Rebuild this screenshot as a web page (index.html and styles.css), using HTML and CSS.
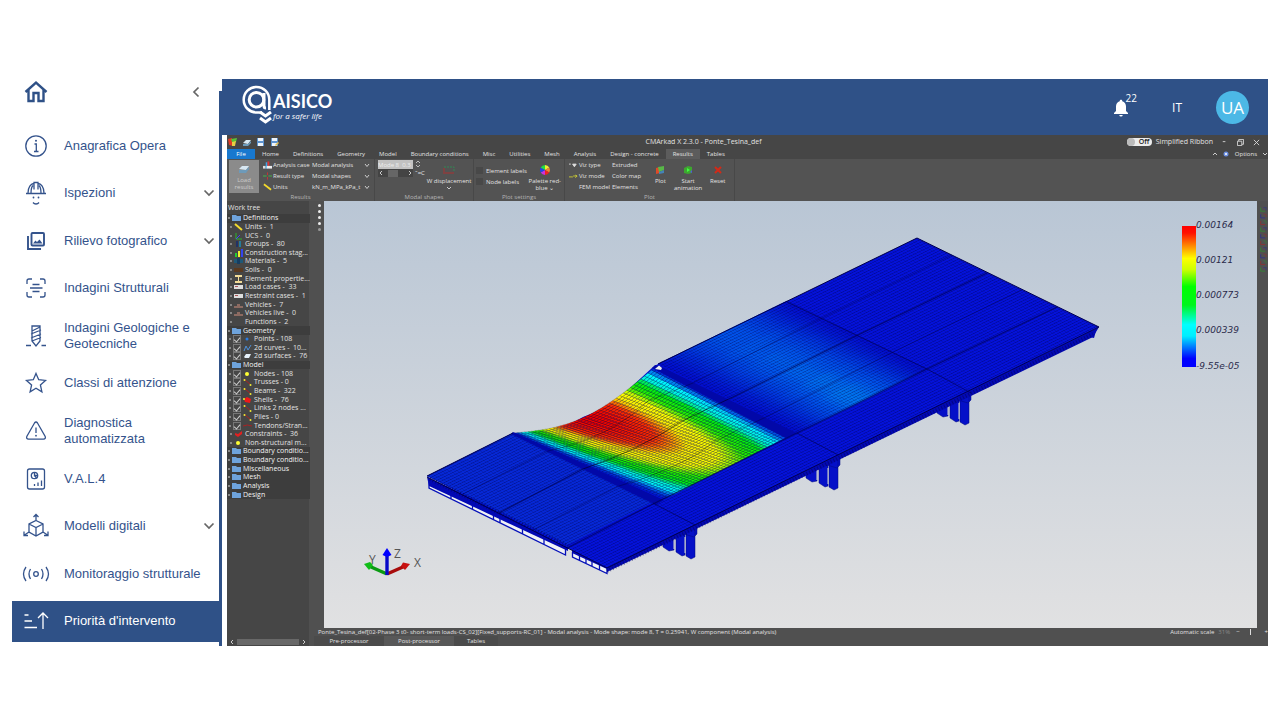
FILE: index.html
```html
<!DOCTYPE html>
<html lang="it">
<head>
<meta charset="utf-8">
<title>AISICO</title>
<link rel="stylesheet" href="styles.css">
</head>
<body>
<div class="app">
  <nav class="sidebar">
    <div class="side-top">
      <a href="#" class="home" aria-label="Home"><svg width="26" height="24" viewBox="0 0 26 24"><path d="M2.500 12 L13 2.500 L23.500 12 M5.500 10 V21 H10.500 V13 H15.500 V21 H20.500 V10" fill="none" stroke="#2f5187" stroke-width="2.400"/></svg></a>
      <button class="collapse" aria-label="Comprimi"><svg width="8" height="12" viewBox="0 0 8 12"><path d="M6.500 1.500 L2 6 L6.500 10.500" class="chev"/></svg></button>
    </div>
    <ul class="menu">
      <li><a href="#" class="item"><svg class="ico" viewBox="0 0 28 28"><circle cx="14" cy="14" r="10.200"/><path d="M12.500 12 H14.300 V19.500 M12 19.500 H16.500"/><circle cx="14" cy="8.700" r="1" class="dot"/></svg><span>Anagrafica Opera</span></a></li>
      <li><a href="#" class="item"><svg class="ico" viewBox="0 0 28 28"><path d="M4 14.500 H24 M6 14 C6 8 9 5 11.500 4.500 M16.500 4.500 C19 5 22 8 22 14 M12 10.500 V3.500 H16 V10.500 M9 14 C9 10 9.500 8 11 6.500 M19 14 C19 10 18.500 8 17 6.500 M11 23.500 C12.500 25.500 15.500 25.500 17 23.500"/><circle cx="11.500" cy="18.500" r=".9" class="dot"/><circle cx="16.500" cy="18.500" r=".9" class="dot"/></svg><span>Ispezioni</span><svg class="arrow" viewBox="0 0 12 8"><path d="M1.500 1.500 L6 6 L10.500 1.500" class="chev"/></svg></a></li>
      <li><a href="#" class="item"><svg class="ico thick" viewBox="0 0 28 28"><rect x="9.500" y="6" width="12.500" height="12.500" rx="1"/><path d="M6 9 V22 H19"/><path d="M11 16.500 L13.500 13.500 L15 15 L17.500 12.500 L20.500 16.500 Z" class="dot"/></svg><span>Rilievo fotografico</span><svg class="arrow" viewBox="0 0 12 8"><path d="M1.500 1.500 L6 6 L10.500 1.500" class="chev"/></svg></a></li>
      <li><a href="#" class="item"><svg class="ico" viewBox="0 0 28 28"><path d="M5 10 V7 Q5 5 7 5 H10 M18 5 H21 Q23 5 23 7 V10 M23 18 V21 Q23 23 21 23 H18 M10 23 H7 Q5 23 5 21 V18 M10.500 10.500 H17.500 M8 14 H20.500 M10.500 17.500 H17.500"/></svg><span>Indagini Strutturali</span></a></li>
      <li><a href="#" class="item"><svg class="ico" viewBox="0 0 28 28"><path d="M10 4 H18 V19 L14 24 L10 19 Z M10 9 L18 5 M9 12 L19 8 M9 16 L19 12 M10 19 L19 15.500 M4 23.500 H9 M19.500 23.500 H24"/></svg><span>Indagini Geologiche e Geotecniche</span></a></li>
      <li><a href="#" class="item"><svg class="ico" viewBox="0 0 28 28"><path d="M14 4.500 L16.700 10.700 L23.500 11.400 L18.400 15.900 L19.900 22.800 L14 19.200 L8.100 22.800 L9.600 15.900 L4.500 11.400 L11.300 10.700 Z"/></svg><span>Classi di attenzione</span></a></li>
      <li><a href="#" class="item"><svg class="ico" viewBox="0 0 28 28"><path d="M12.500 6 Q14 4 15.500 6 L23.200 19.500 Q24 22 21.500 22.200 H6.500 Q4 22 4.800 19.500 Z M14 10.500 V16"/><circle cx="14" cy="18.700" r=".9" class="dot"/></svg><span>Diagnostica automatizzata</span></a></li>
      <li><a href="#" class="item"><svg class="ico" viewBox="0 0 28 28"><rect x="5.500" y="4" width="17" height="20" rx="2"/><circle cx="12.500" cy="10.500" r="3.200"/><path d="M12.500 7.500 V10.500 H15.500 M12.500 10.500 L14.500 13 M12.500 21 V19 M16 21 V17.500 M19.500 21 V15.500"/></svg><span>V.A.L.4</span></a></li>
      <li><a href="#" class="item"><svg class="ico" viewBox="0 0 28 28"><path d="M14 8.500 L21 12 V20 L14 24 L7 20 V12 Z M7 12 L14 15.500 L21 12 M14 15.500 V24 M14 8.500 V3 M11.500 5 L14 2.500 L16.500 5 M7 20 L2.500 23 M2 19.500 V23.500 H6 M21 20 L25.500 23 M26 19.500 V23.500 H22"/></svg><span>Modelli digitali</span><svg class="arrow" viewBox="0 0 12 8"><path d="M1.500 1.500 L6 6 L10.500 1.500" class="chev"/></svg></a></li>
      <li><a href="#" class="item"><svg class="ico" viewBox="0 0 28 28"><circle cx="14" cy="14" r="2.300"/><path d="M8.500 9 Q5.500 14 8.500 19 M4 7 Q-1 14 4 21 M19.500 9 Q22.500 14 19.500 19 M24 7 Q29 14 24 21"/></svg><span>Monitoraggio strutturale</span></a></li>
      <li><a href="#" class="item selected"><svg class="ico" viewBox="0 0 28 28"><path d="M2.500 8 H6.500 M2.500 14 H10 M2.500 20.500 H15 M21 22 V6 M16 11 L21 6 L26 11"/></svg><span>Priorità d'intervento</span></a></li>
    </ul>
  </nav>

  <main class="main">
    <header class="header">
      <a href="#" class="brand">
        <svg width="30" height="42" viewBox="0 0 30 42"><g fill="none" stroke="#fff"><path d="M20 28.500 H14.500 A12.800 12.800 0 1 1 27.300 15.700 V26" stroke-width="2.500"/><path d="M22 9 V22 Q22 24 24 24" stroke-width="3"/><circle cx="14.500" cy="15.700" r="7.300" stroke-width="3"/><path d="M18 28 L23.500 32 L29 28 M18 34 L23.500 38 L29 34" stroke-width="3"/></g></svg>
        <span class="brand-text"><b>AISICO</b><i>for a safer life</i></span>
      </a>
      <div class="user-tools">
        <button class="bell" aria-label="Notifiche"><svg width="16" height="18" viewBox="0 0 16 18"><path d="M8 .8 C9 .8 9.300 1.500 9.300 2.300 C11.800 3 13 5 13 7.500 V12 L15 14 V15 H1 V14 L3 12 V7.500 C3 5 4.200 3 6.700 2.300 C6.700 1.500 7 .8 8 .8 Z M6.200 16 H9.800 Q9.500 17.500 8 17.500 Q6.500 17.500 6.200 16 Z" fill="#fff"/></svg><span>22</span></button>
        <button class="lang">IT</button>
        <button class="avatar">UA</button>
      </div>
    </header>

    <section class="window">
      <div class="titlebar">
        <div class="quick">
          <svg viewBox="0 0 10 9"><path d="M0 1 L4 0 L5 8 L1 7 Z" fill="#e23b25"/><path d="M3 1 L9 0 L8 4 L4 4 Z" fill="#59c236"/><path d="M4 4 L8 3 L7 8 L4 8 Z" fill="#e8cf43"/></svg>
          <svg viewBox="0 0 10 9"><path d="M1 5 L4 2 H9 L6 6 Z" fill="#d7e7f2"/><path d="M1 6 H6 L9 3 V5 L6 8 H1 Z" fill="#6d9ab9"/></svg>
          <svg viewBox="0 0 10 9"><path d="M1 0 H8 V8 H1 Z" fill="#5d93cf"/><path d="M2 0 H7 V3 H2 Z M2 5 H7 V8 H2 Z" fill="#eef4fa"/></svg>
          <svg viewBox="0 0 10 9"><path d="M1 0 H8 V8 H1 Z" fill="#5d93cf"/><path d="M2 0 H7 V3 H2 Z M2 5 H7 V8 H2 Z" fill="#eef4fa"/><path d="M5 7 L8 4 L9 5 L6 8 Z" fill="#e0bd4f"/></svg>
        </div>
        <h1 class="doc-title">CMArkad X 2.3.0 - Ponte_Tesina_def</h1>
        <div class="win-tools">
          <button class="toggle"><i></i>Off</button><span>Simplified Ribbon</span>
          <button class="winbtn" aria-label="Riduci"><svg viewBox="0 0 8 8"><path d="M2 3 H5"/></svg></button>
          <button class="winbtn" aria-label="Ripristina"><svg viewBox="0 0 8 8"><path d="M.5 2.500 H5.500 V7.500 H.5 Z M2 2.500 V.5 H7.500 V6 H5.500"/></svg></button>
          <button class="winbtn" aria-label="Chiudi"><svg viewBox="0 0 8 8"><path d="M1 1 L7 7 M7 1 L1 7"/></svg></button>
        </div>
      </div>
      <div class="tabs">
        <button class="file">File</button><button>Home</button><button>Definitions</button><button>Geometry</button><button>Model</button><button>Boundary conditions</button><button>Misc</button><button>Utilities</button><button>Mesh</button><button>Analysis</button><button>Design - concrete</button><button class="active">Results</button><button>Tables</button>
        <div class="options"><svg viewBox="0 0 4 4"><path d="M0 3 L2 1 L4 3" stroke="#ccc" fill="none"/></svg><svg class="eye" viewBox="0 0 6 6"><circle cx="3" cy="3" r="2.500" fill="#6d8fe0"/><circle cx="3" cy="3" r="1" fill="#fff"/></svg><button>Options</button><svg viewBox="0 0 4 4"><path d="M0 1 L2 3 L4 1" stroke="#ccc" fill="none"/></svg></div>
      </div>

      <div class="ribbon">
        <div class="group g-results">
          <div class="tools">
            <button class="big pressed"><svg viewBox="0 0 12 10"><path d="M1 5 L4 2 H11 L8 6 Z" fill="#d7e7f2"/><path d="M1 6 H8 L11 3 V5 L8 9 H1 Z" fill="#6d9ab9"/></svg>Load results</button>
            <div class="fields">
              <svg viewBox="0 0 10 8"><path d="M0 5 H3 V8 H0 Z" fill="#ddd"/><path d="M3 1 H5 V8 H3 Z" fill="#3aa5e8"/><path d="M5 0 H7 V5 H5 Z" fill="#d33"/><path d="M4 5 H10 V8 H4 Z" fill="#eee"/></svg><label for="ac">Analysis case</label><select id="ac"><option>Modal analysis</option></select>
              <svg viewBox="0 0 10 8"><path d="M0 4 H4 M6 4 H10" stroke="#4b4"/><path d="M5 0 V3 M5 5 V8" stroke="#c33"/></svg><label for="rt">Result type</label><select id="rt"><option>Modal shapes</option></select>
              <svg viewBox="0 0 10 8"><path d="M1 1 L9 7" stroke="#f4da2b" stroke-width="2"/></svg><label for="un">Units</label><select id="un"><option>kN_m_MPa_kPa_t</option></select>
            </div>
          </div>
          <p>Results</p>
        </div>
        <div class="group g-modal">
          <div class="tools">
            <div class="mode"><input aria-label="Mode" value="Mode 8  0.3"><span class="spin"><svg viewBox="0 0 6 8"><path d="M1 3 L3 1 L5 3 M1 5 L3 7 L5 5"/></svg></span><span class="hscroll"><svg viewBox="0 0 4 6"><path d="M3 1 L1 3 L3 5"/></svg><i></i><svg viewBox="0 0 4 6"><path d="M1 1 L3 3 L1 5"/></svg></span><span class="spin">˜=C</span></div>
            <button class="big"><svg viewBox="0 0 12 10"><path d="M1 9 V3 M2 8 H11" stroke="#a33" fill="none"/><path d="M1 2 H11 V7" stroke="#385" fill="none" stroke-dasharray="2 1"/></svg>W displacement<svg class="drop" viewBox="0 0 6 4"><path d="M1 1 L3 3 L5 1"/></svg></button>
          </div>
          <p>Modal shapes</p>
        </div>
        <div class="group g-plotset">
          <div class="tools">
            <div class="checks"><label><input type="checkbox">Element labels</label><label><input type="checkbox">Node labels</label></div>
            <button class="big"><svg viewBox="0 0 10 10"><path d="M5 5 V0 A5 5 0 0 1 9.300 2.500 Z" fill="#ee3"/><path d="M5 5 L9.300 2.500 A5 5 0 0 1 9.300 7.500 Z" fill="#e83"/><path d="M5 5 L9.300 7.500 A5 5 0 0 1 5 10 Z" fill="#e22"/><path d="M5 5 V10 A5 5 0 0 1 .7 7.500 Z" fill="#c3d"/><path d="M5 5 L.7 7.500 A5 5 0 0 1 .7 2.500 Z" fill="#24e"/><path d="M5 5 L.7 2.500 A5 5 0 0 1 5 0 Z" fill="#2d4"/></svg>Palette red-blue ⌄</button>
          </div>
          <p>Plot settings</p>
        </div>
        <div class="group g-plot">
          <div class="tools">
            <div class="fields two">
              <svg viewBox="0 0 10 8"><path d="M0 3 H2 M4 3 H8 L6 6 Z" stroke="#ddd" fill="#ddd"/></svg><span>Viz type</span><button>Extruded</button>
              <svg viewBox="0 0 10 8"><path d="M0 5 H4 L5 4 H9 M7 3 L9 4 L7 6" stroke="#cc3" fill="none"/></svg><span>Viz mode</span><button>Color map</button>
              <i></i><span>FEM model</span><button>Elements</button>
            </div>
            <button class="big b1"><svg viewBox="0 0 12 10"><path d="M2 3 L6 2 V8 L2 9 Z" fill="#e04a28"/><path d="M4 2 L10 1 V5 L5 7 Z" fill="#58b848"/><path d="M5 7 L10 5 V8 L5 9 Z" fill="#4483b8"/></svg>Plot</button>
            <button class="big b2"><svg viewBox="0 0 12 10"><path d="M2 3 L6 1 L10 2 V8 L6 9 L2 8 Z" fill="#3da72f"/><path d="M5 3 L8 5 L5 7 Z" fill="#40ff40"/><path d="M8 7 L10 5 V8 Z" fill="#55d"/></svg>Start animation</button>
            <button class="big b3"><svg viewBox="0 0 12 10"><path d="M3 2 L9 8 M9 2 L3 8" stroke="#d22a18" stroke-width="2"/></svg>Reset</button>
          </div>
          <p>Plot</p>
        </div>
      </div>

      <div class="work">
        <aside class="tree-panel">
          <h2>Work tree</h2>
          <ul class="tree" id="tree"></ul>
          <div class="hbar"><svg viewBox="0 0 4 6"><path d="M3 1 L1 3 L3 5"/></svg><i></i><svg viewBox="0 0 4 6"><path d="M1 1 L3 3 L1 5"/></svg></div>
        </aside>
        <div class="stage">
          <div class="stage-row">
            <div class="dots"><i></i><i></i><i></i><i></i><i></i></div>
            <svg class="view" viewBox="324 201 933 427" role="img" aria-label="Modal shape">
              <defs>
                <linearGradient id="sky" x1="0" y1="0" x2="0" y2="1"><stop offset="0" stop-color="#b9c6d5"/><stop offset="1" stop-color="#e1e1e2"/></linearGradient>
                <linearGradient id="scale" x1="0" y1="0" x2="0" y2="1"><stop offset="0" stop-color="#f00"/><stop offset=".05" stop-color="#f10"/><stop offset=".23" stop-color="#ff0"/><stop offset=".31" stop-color="#cf0"/><stop offset=".43" stop-color="#0f0"/><stop offset=".56" stop-color="#00f61c"/><stop offset=".7" stop-color="#0ff"/><stop offset=".78" stop-color="#0ef"/><stop offset=".94" stop-color="#00f"/><stop offset="1" stop-color="#00f"/></linearGradient>
                <pattern id="mesh" width="1" height="1" patternUnits="userSpaceOnUse" patternTransform="matrix(4 -1.944 3 1.467 427 476)"><path d="M0 0 H1" stroke="#000048" stroke-width=".26" opacity=".75"/><path d="M0 0 V1" stroke="#000048" stroke-width=".14" opacity=".5"/></pattern>
                <g id="pier"><path d="M663 540 L674 534 V550 L669 551 L663 547 Z M676 533 H685 V555 L682 556 L676 552 Z M686 527 H695 V557 L691 559 L686 556 Z M684 526 L697 522 V534 L694 537 L684 534 Z"/><path d="M674 538 V549 M685 537 V553" stroke="#d0d4dc" stroke-width="1"/></g>
              </defs>
              <rect x="324" y="201" width="933" height="427" fill="url(#sky)"/>
              <g fill="#0510c8" stroke="#00087e" stroke-width=".5">
                <use href="#pier"/><use href="#pier" x="143" y="-69"/><use href="#pier" x="274" y="-134"/>
              </g>
              <path d="M429 480 V488 L565 555 V546 Z M572 552 V557 L607 573 V567 Z" fill="#f0f2f5"/>
              <g fill="none" stroke="#0510b8" stroke-width="1.300">
                <path d="M429 482 V488 L565.500 555 V548 M451 492 V499 M472.500 502 V509 M493.500 513 V520 M500 516 V523 M522.500 527 V534 M544 537 V544"/>
                <path d="M572.500 552 V557 L607 573.500 V567 M579.500 555 V560 M586 558 V563 M592 561 V566 M599.500 565 V570"/>
              </g>
              <path d="M427 477 L429 486 L568 551 V543 Z" fill="#0309b4"/>
              <path d="M572 545 V553 L607 569 V560 Z" fill="#0309b4"/>
              <path d="M607 567 V572 L700 527 L1093 337 L1099 327 Z" fill="#0309b4"/>
              <path d="M1088 331 H1096 L1094 338 L1090 337 Z" fill="#0309b4"/>
              <path id="deck" d="M427 476 L513 433 Q540 433 557 427 Q570 425 583 417 Q597 412 607 405 Q620 397 630 388 L653 367 L658 364 L917 238 L1099 327 L607 568 Z" fill="#0412da"/>
              <path d="M427 476 L513 433 L653 502 L567 545 Z" fill="#0628d6"/>
              <g id="spans"></g>
              <path d="M427 476 L513 433 L655 502 L797 433 L658 364 L917 238 L1099 327 L607 568 Z" fill="url(#mesh)"/>
              <path d="M513 432 L664 500 L656 505 L511 434 Z M655 365 L660 366 L797 433 L786 438 L652 368 Z" fill="#0208a8"/>
              <path d="M655 369 L659 365.500 L662 368 L661 370 Z" fill="#e9edf2"/>
              <g fill="none" stroke="#000050">
                <path d="M427 476 L513 433 M658 364 L917 238 L1099 327 L607 568 L427 477" stroke-width="1"/>
                <path d="M499 513 L583 469 M735 396 L858 335 L987 273 M567 548 L657 502 L797 433 L927 369 L1057 307" stroke-width="1.200" opacity=".65"/>
                <path d="M583 469 Q640 450 680 422 L735 396" stroke="#000" stroke-width="1" opacity=".5"/>
                <path d="M463 494 L548 451 M533 530 L619 486 M693 383 L822 318 L952 255 M766 417 L893 352 L1022 290" stroke-width=".8" opacity=".5"/>
                <path d="M548 451 Q610 438 648 401 L693 383 M619 486 Q685 467 715 441 L766 417" stroke="#000" stroke-width=".8" opacity=".35"/>
                <path d="M653 503 L695 525 M797 433 L838 455 M787 302 L927 369 L971 393" stroke-width="1" opacity=".6"/>
                <path d="M430 479 L568 546 M607 571 L1093 334" stroke-width="4" stroke-dasharray="1 2" opacity=".45"/>
              </g>
              <g stroke-width="3.500">
                <path d="M387 574 L370 566.500" stroke="#0b9b12"/><path d="M364 564 L370 562 L373 565 L369 570 Z" fill="#10bd18"/>
                <path d="M387 574 L404 566.500" stroke="#a80c0c"/><path d="M410 564 L403 562.500 L401 566 L405 570 Z" fill="#c81010"/>
                <path d="M385.300 555 H388.700 V575 H385.300 Z" fill="#0808c8"/><path d="M387 548 L391.500 555 L387 557 L382.500 555 Z" fill="#00f"/>
              </g>
              <g class="axis"><text x="369" y="564">Y</text><text x="394" y="558">Z</text><text x="414" y="567">X</text></g>
              <rect x="1182" y="226" width="14" height="141" fill="url(#scale)"/>
              <g class="legend"><text x="1196" y="228">0.00164</text><text x="1196" y="263">0.00121</text><text x="1196" y="298">0.000773</text><text x="1196" y="333">0.000339</text><text x="1196" y="369">-9.55e-05</text></g>
            </svg>
            <div class="rail"><svg viewBox="0 0 10 74" id="rail"></svg></div>
          </div>
          <div class="status"><span>Ponte_Tesina_def[02-Phase 3 t0- short-term loads-CS_02][Fixed_supports-RC_01] - Modal analysis - Mode shape: mode 8, T = 0.25941, W component (Modal analysis)</span><span class="zoom">Automatic scale <em>31%</em><b>−</b><i></i><b>+</b></span></div>
          <div class="views"><button>Pre-processor</button><button class="on">Post-processor</button><button>Tables</button></div>
        </div>
      </div>
    </section>
  </main>
</div>
<script src="scene.js"></script>
</body>
</html>
```
FILE: styles.css
```css
* { box-sizing: border-box; }
body { margin: 0; background: #fff; font-family: "Liberation Sans", Arial, sans-serif; }
button { font: inherit; color: inherit; background: none; border: 0; padding: 0; cursor: pointer; }
a { color: inherit; text-decoration: none; }
ul { list-style: none; margin: 0; padding: 0; }
p, h1, h2 { margin: 0; font-weight: 400; font-size: inherit; }
.app { display: flex; margin: 79px 12px 0; }

.sidebar { width: 207px; flex: none; display: flex; flex-direction: column; padding-bottom: 4px; }
.side-top { height: 46px; display: flex; justify-content: space-between; padding: 1px 19px 0 11px; }
.home { height: 24px; }
.collapse { height: 24px; line-height: 1; padding-top: 2px; }
.chev { fill: none; stroke: #666; stroke-width: 1.7; }
.menu { flex: 1; display: flex; flex-direction: column; justify-content: space-between; }
.item { display: flex; align-items: center; height: 41px; padding: 0 4px 0 10px; font-size: 13px; line-height: 16px; color: #34538c; }
.item span { flex: 1; }
.ico { width: 28px; height: 28px; flex: none; margin-right: 14px; fill: none; stroke: #34538c; stroke-width: 1.3; }
.ico.thick { stroke-width: 1.9; }
.ico .dot { fill: #34538c; stroke: none; }
.arrow { width: 12px; height: 8px; flex: none; }
.item .arrow { margin-right: 0; }
.item.selected { background: #2f5187; color: #fff; }
.item.selected .ico { stroke: #fff; }

.main { flex: 1; min-width: 0; display: flex; flex-direction: column; position: relative; padding-left: 3px; }
.main::before { content: ""; position: absolute; left: 0; top: 12px; bottom: 0; width: 3px; background: #2f5187; }
.header { height: 56px; background: #2f5187; color: #fff; display: flex; align-items: center; justify-content: space-between; padding: 0 19px 0 20px; }
.brand { display: flex; gap: 1px; align-items: center; }
.brand svg { margin-top: -4px; }
.brand-text { display: flex; flex-direction: column; font-family: Lato, sans-serif; margin-top: -2px; }
.brand-text b { font-size: 18px; line-height: 19px; }
.brand-text i { font-family: "Open Sans", sans-serif; font-size: 8px; line-height: 10px; }
.user-tools { display: flex; align-items: center; font-family: "Open Sans", sans-serif; }
.bell { display: flex; align-items: flex-end; height: 22px; margin: -2px 35px 0 0; }
.bell span { font-size: 10px; line-height: 10px; align-self: flex-start; margin: -2px 0 0 -3px; }
.lang { font-size: 12px; margin-right: 34px; }
.avatar { width: 33px; height: 33px; border-radius: 50%; background: #4cb8e6; font-size: 17px; }

.window { margin-left: 5px; flex: 1; background: #515151; color: #e2e2e2; font-family: "Open Sans", sans-serif; font-size: 6px; line-height: 8px; display: flex; flex-direction: column; }
.titlebar { height: 14px; background: #464646; display: grid; grid-template-columns: 1fr auto 1fr; align-items: center; }
.quick { display: flex; gap: 4px; padding-left: 1px; }
.quick svg { width: 10px; height: 9px; }
.doc-title { font-size: 7px; padding-right: 88px; }
.win-tools { display: flex; justify-content: flex-end; align-items: center; gap: 4px; font-size: 7px; padding-right: 7px; }
.toggle { width: 25px; height: 8px; line-height: 8px; border-radius: 4px; background: #ececec; color: #222; display: flex; gap: 4px; font-weight: 600; }
.toggle i { width: 8px; height: 8px; border-radius: 50%; background: #bbb; }
.winbtn { width: 8px; height: 12px; margin-left: 4px; }
.winbtn svg { display: block; width: 7px; height: 7px; fill: none; stroke: #ddd; stroke-width: 1; }
.tabs { display: flex; height: 10px; background: #464646; line-height: 10px; }
.tabs > button { padding: 0 7px; }
.tabs .file { background: #1878cf; width: 28px; color: #fff; }
.tabs .active { background: #5c5c5c; }
.options { margin-left: auto; display: flex; align-items: center; gap: 6px; padding-right: 1px; }
.options svg { width: 4px; height: 4px; }
.options .eye { width: 6px; height: 6px; }

.ribbon { display: flex; height: 42px; background: #535353; }
.group { display: flex; flex-direction: column; border-right: 1px solid #484848; padding: 1px 2px 0; }
.group p { text-align: center; color: #b5b5b5; line-height: 8px; }
.tools { display: flex; height: 33px; }
.g-results { width: 148px; }
.g-modal { width: 99px; }
.g-plotset { width: 91px; }
.g-plot { width: 170px; }
.big { display: flex; flex-direction: column; align-items: center; padding-top: 5px; line-height: 7px; }
.big svg { width: 12px; height: 10px; margin-bottom: 3px; }
.big .drop, .hscroll svg, .hbar svg { width: 6px; height: 6px; margin: 0; fill: none; stroke: #ccc; }
.pressed { width: 30px; background: #8b8b8b; color: #ccc; padding-top: 4px; }
.fields { display: grid; grid-template-columns: 9px 38px 1fr; grid-auto-rows: 10px; gap: 1px; align-items: center; flex: 1; padding-left: 4px; white-space: nowrap; }
.fields svg { width: 9px; height: 8px; }
.fields select { appearance: none; font: inherit; color: inherit; border: 0; padding: 0 8px 0 0; width: 60px; height: 10px; background: url("data:image/svg+xml,%3Csvg xmlns='http://www.w3.org/2000/svg' width='6' height='5'%3E%3Cpath d='M1 1L3 3.500L5 1' fill='none' stroke='%23ccc'/%3E%3C/svg%3E") no-repeat right 2px center; }
.fields button { text-align: left; }
.fields.two { flex: none; width: 80px; grid-template-columns: 9px 32px 1fr; padding: 0 0 0 2px; }
.mode { width: 50px; display: grid; grid-template-columns: 35px 1fr; grid-template-rows: 9px 8px; align-content: start; padding-left: 1px; }
.mode input { width: 35px; height: 9px; border: 0; padding: 0; font: inherit; background: #c2c2c2; color: #eee; }
.spin { padding-left: 2px; line-height: 8px; white-space: nowrap; }
.spin svg { display: block; width: 6px; height: 8px; fill: none; stroke: #bbb; }
.hscroll { display: flex; align-items: center; justify-content: space-between; background: #444; }
.hscroll i { width: 10px; height: 7px; background: #666; margin-right: 6px; }
.checks { width: 54px; padding-top: 5px; }
.checks label { display: flex; align-items: center; gap: 3px; height: 11px; white-space: nowrap; }
.checks input { appearance: none; margin: 0; width: 7px; height: 7px; background: #484848; }
.g-plotset .big { width: 36px; }
.g-modal .big { width: 44px; white-space: nowrap; }
.b1 { width: 26px; margin-left: 1px; } .b2 { width: 32px; } .b3 { width: 30px; }

.work { flex: 1; display: flex; background: #505050; }
.tree-panel { width: 82px; margin-right: 5px; background: #464646; display: flex; flex-direction: column; font-size: 7px; }
.tree-panel h2 { height: 13px; line-height: 13px; padding-left: 1px; }
.tree { display: grid; grid-auto-rows: 1fr; height: 285px; }
.tree li { display: flex; align-items: center; gap: 2px; white-space: pre; padding-left: 8px; }
.tree li.head { background: #3d3d3d; padding-left: 5px; color: #f2f2f2; }
.tree li.sub { padding-left: 7px; }
.tree li::before { content: ""; width: 2px; height: 2px; margin-left: -5px; flex: none; background: #888; }
.tree li.head::before { margin-left: -4px; }
.tree svg { width: 9px; height: 8px; flex: none; }
.tree input { appearance: none; flex: none; margin: 0; width: 8px; height: 8px; border: 1px solid #777; display: grid; place-items: center; }
.tree input:checked::before { content: ""; width: 3px; height: 5px; border: solid #ccc; border-width: 0 1px 1px 0; transform: rotate(40deg); }
.hbar { margin-top: auto; height: 8px; display: flex; align-items: center; justify-content: space-between; padding: 0 2px; }
.hbar i { flex: 1; height: 6px; background: #686868; margin: 0 2px; }
.stage { flex: 1; min-width: 0; display: flex; flex-direction: column; }
.stage-row { display: flex; }
.dots { width: 10px; flex: none; display: flex; flex-direction: column; gap: 3px; align-items: center; padding-top: 3px; }
.dots i { width: 3px; height: 3px; border-radius: 50%; background: #eee; }
.dots i:last-child { background: #999; }
.view { display: block; flex: 1; min-width: 0; }
.rail { width: 11px; flex: none; padding: 2px 1px; }
.rail svg { width: 9px; height: 74px; display: block; }
.axis { font: 12px "Open Sans", sans-serif; fill: #555; }
.legend { font: italic 9px "DejaVu Sans", Verdana, sans-serif; fill: #2a2a4a; }
.status { display: flex; justify-content: space-between; height: 8px; padding: 0 0 0 4px; white-space: nowrap; }
.zoom { display: flex; gap: 10px; }
.zoom em { color: #888; font-style: normal; margin: 0 -4px 0 -6px; }
.zoom i { width: 1px; height: 6px; background: #ddd; margin-top: 1px; }
.zoom b { font-weight: 400; }
.zoom b:last-child { margin-left: 4px; }
.views { display: flex; height: 10px; }
.views button { width: 70px; background: #4b4b4b; }
.views .on { background: #585858; }
.views button:last-child { width: 44px; }
```
FILE: scene.js
```js
const shapes = {
  folder: '<path d="M0 1 H4 L5 2 H9 V7 H0 Z" fill="#6ea3dc"/>',
  pen: '<path d="M1 1 L8 7" stroke="#f3dc2d" stroke-width="2"/>',
  ucs: '<path d="M2 1 V7 H8" stroke="#2bb52b" fill="none"/><path d="M2 7 L6 3" stroke="#44f"/>',
  group: '<path d="M2 1 H4 V7 H2 Z" fill="#236"/><path d="M5 1 H7 V7 H5 Z" fill="#257a9a"/>',
  bars: '<path d="M1 4 H3 V8 H1 Z" fill="#2c3"/><path d="M4 2 H6 V8 H4 Z" fill="#ee3"/><path d="M7 0 H9 V8 H7 Z" fill="#34e"/>',
  mat: '<path d="M0 2 H9 V6 H0 Z" fill="#1e5878"/><path d="M3 1 H6 V7 H3 Z" fill="#173d60"/>',
  soil: '<path d="M0 2 H9 V6 H0 Z" fill="#5a3a20"/>',
  beam: '<path d="M1 0 H8 V2 H5 V6 H8 V8 H1 V6 H4 V2 H1 Z" fill="#f2dc98"/>',
  load: '<path d="M0 2 H9 V6 H0 Z" fill="#ddd"/><path d="M1 3 H4 V4 H1 Z" fill="#a55"/>',
  car: '<path d="M0 5 H9 V7 H0 Z M3 3 H6 V5 H3 Z" fill="#8d6b62"/>',
  none: '',
  point: '<circle cx="4" cy="4" r="1.500" fill="#2a7be0"/>',
  curve: '<path d="M1 7 L3 2 L5 6 L8 1" stroke="#4c8fd8" fill="none"/>',
  surf: '<path d="M1 5 L3 2 L8 2 L6 6 L2 6 Z" fill="#e6f1fa"/>',
  node: '<circle cx="4" cy="4" r="2" fill="#ff3"/>',
  truss: '<path d="M1 1 L8 7" stroke="#a22"/><circle cx="1.500" cy="2" r="1" fill="#ee3"/><circle cx="7.500" cy="7" r="1" fill="#ee3"/>',
  shell: '<path d="M1 3 L4 1 L8 3 L7 7 L2 6 Z" fill="#f01818"/><circle cx="1" cy="3" r="1" fill="#ee3"/>',
  tendon: '<path d="M0 4 Q4 2 9 4" stroke="#a22" fill="none"/>',
  cons: '<path d="M1 3 L4 4 L8 1 V4 L4 7 L1 5 Z" fill="#e02020"/>'
};
const rows = [
  ['head', 'folder', 'Definitions'], ['', 'pen', 'Units -  1'], ['', 'ucs', 'UCS -  0'], ['', 'group', 'Groups -  80'],
  ['', 'bars', 'Construction stag...'], ['', 'mat', 'Materials -  5'], ['', 'soil', 'Soils -  0'], ['', 'beam', 'Element propertie...'],
  ['', 'load', 'Load cases -  33'], ['', 'load', 'Restraint cases -  1'], ['', 'car', 'Vehicles -  7'], ['', 'car', 'Vehicles live -  0'],
  ['', 'none', 'Functions -  2'], ['head', 'folder', 'Geometry'], ['sub', 'point', 'Points - 108'], ['sub', 'curve', '2d curves -  10...'],
  ['sub', 'surf', '2d surfaces -  76'], ['head', 'folder', 'Model'], ['sub', 'node', 'Nodes - 108'], ['sub', 'truss', 'Trusses - 0'],
  ['sub', 'truss', 'Beams -  322'], ['sub', 'shell', 'Shells -  76'], ['sub', 'truss', 'Links 2 nodes ...'], ['sub', 'truss', 'Piles - 0'],
  ['sub', 'tendon', 'Tendons/Stran...'], ['', 'cons', 'Constraints -  36'], ['', 'node', 'Non-structural m...'],
  ['head', 'folder', 'Boundary conditio...'], ['head', 'folder', 'Boundary conditio...'], ['head', 'folder', 'Miscellaneous'],
  ['head', 'folder', 'Mesh'], ['head', 'folder', 'Analysis'], ['head', 'folder', 'Design']
];
document.getElementById('tree').innerHTML = rows.map(([kind, icon, text]) => {
  const svg = `<svg viewBox="0 0 9 8">${shapes[icon]}</svg>`;
  return kind === 'sub'
    ? `<li class="sub"><input type="checkbox" checked aria-label="${text}">${svg}<span>${text}</span></li>`
    : `<li class="${kind}">${svg}<span>${text}</span></li>`;
}).join('');

// Colour ramp of the displacement scale, 0 to 1
const ramp = [[0, 2, 14, 205], [0.1, 0, 90, 235], [0.2, 0, 245, 255], [0.3, 0, 245, 215], [0.4, 0, 235, 20], [0.54, 40, 240, 0], [0.66, 250, 255, 0], [0.77, 255, 240, 0], [0.87, 255, 50, 0], [1, 240, 0, 0]];
function colour(t) {
  let i = 1;
  while (i < ramp.length - 1 && ramp[i][0] < t) i++;
  const a = ramp[i - 1], b = ramp[i];
  const k = Math.max(0, Math.min(1, (t - a[0]) / (b[0] - a[0])));
  return `rgb(${[1, 2, 3].map(c => Math.round(a[c] + (b[c] - a[c]) * k)).join()})`;
}

// One span of the deck: corners in order back-left, back-right, front-right, front-left
function span(q, n, m, sag, value, line) {
  const at = (u, v) => {
    const c = [(1 - u) * (1 - v), u * (1 - v), u * v, (1 - u) * v];
    const x = c.reduce((s, w, i) => s + w * q[i][0], 0);
    const y = c.reduce((s, w, i) => s + w * q[i][1], 0);
    return `${x.toFixed(1)},${(y + sag * Math.sin(Math.PI * u) * (1 - v)).toFixed(1)}`;
  };
  let out = '';
  for (let i = 0; i < n; i++) for (let j = 0; j < m; j++) {
    const f = colour(value((i + 0.5) / n, (j + 0.5) / m));
    out += `<polygon points="${at(i / n, j / m)} ${at((i + 1) / n, j / m)} ${at((i + 1) / n, (j + 1) / m)} ${at(i / n, (j + 1) / m)}" fill="${f}" stroke="${line || f}" stroke-width=".5"/>`;
  }
  return out;
}
document.getElementById('spans').innerHTML =
  span([[658, 364], [787, 301], [927, 369], [797, 433]], 36, 6, 0, (u, v) => 0.12 * Math.sin(Math.PI * u) ** 1.4 * (0.75 + 0.25 * v), '') +
  span([[514, 433], [655, 367], [789, 436], [665, 499]], 40, 48, 17, (u, v) => Math.sin(Math.PI * u) ** 0.95 * (1 - 0.4 * v ** 1.5), 'rgba(0,0,0,.32)');

const tints = ['#383', '#338', '#833'];
document.getElementById('rail').innerHTML = Array.from({ length: 10 }, (_, i) =>
  `<path d="M3 ${i * 7.4 + 1} V${i * 7.4 + 5} H8" stroke="${tints[i % 3]}" fill="none"/><path d="M6 ${i * 7.4 + 1} H9 V${i * 7.4 + 4}" stroke="${tints[(i + 1) % 3]}" fill="none" opacity=".7"/>`).join('');
```
